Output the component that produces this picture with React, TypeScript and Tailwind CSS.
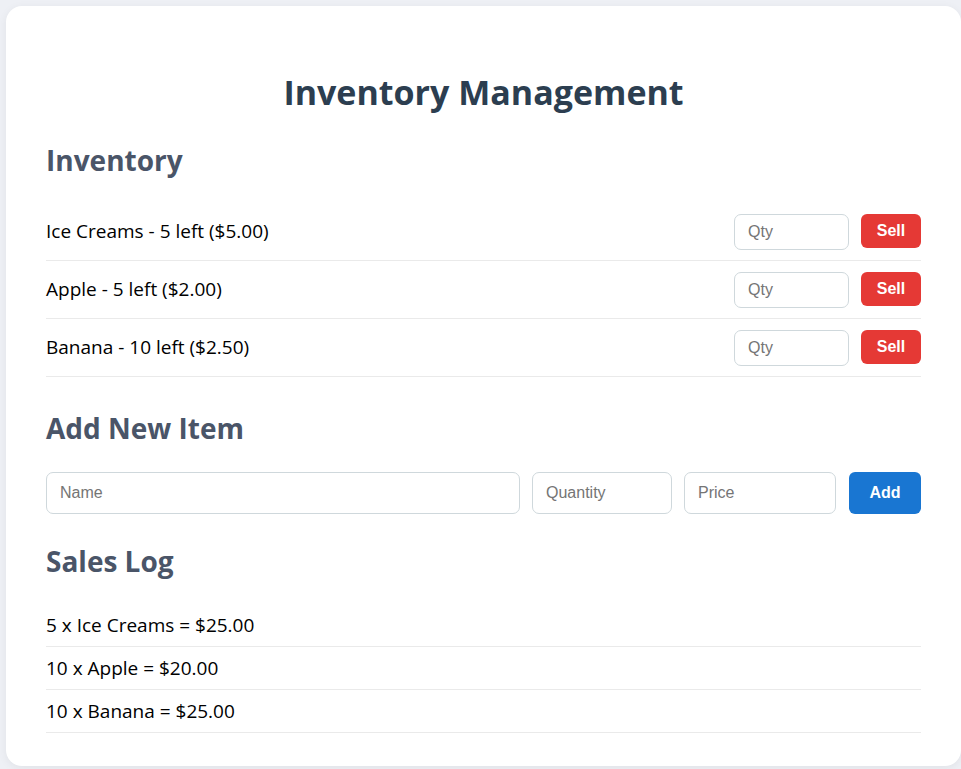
import React, { useState } from "react";

type Item = { name: string; qty: number; price: number };

const items: Item[] = [
  { name: "Ice Creams", qty: 5, price: 5 },
  { name: "Apple", qty: 5, price: 2 },
  { name: "Banana", qty: 10, price: 2.5 },
];

const sales = [
  "5 x Ice Creams = $25.00",
  "10 x Apple = $20.00",
  "10 x Banana = $25.00",
];

const inputCls =
  "rounded-[7px] border border-[#cfd8dc] bg-white px-[13px] text-[16px] text-[#333] placeholder:text-[#757575] outline-none font-['Liberation_Sans',Arial,sans-serif]";

export default function App() {
  const [stock] = useState(items);

  return (
    <div className="min-h-screen bg-[#eef0f5] pl-[6px] pt-[6px] font-['Open_Sans',sans-serif]">
      <div className="w-[955px] rounded-[16px] bg-white px-[40px] pb-[33px] pt-[40px] shadow-[0_2px_10px_rgba(0,0,0,0.06)]">
        <h1 className="mt-[24px] text-center text-[34px] font-bold leading-[44px] text-[#2c3e50]">
          Inventory Management
        </h1>

        <h2 className="mt-[27px] text-[28px] font-bold leading-[38px] text-[#4a5568]">
          Inventory
        </h2>
        <div className="mt-[24px]">
          {stock.map((it) => (
            <div
              key={it.name}
              className="flex h-[58px] items-center justify-between border-b border-[#eaeaea]"
            >
              <span className="text-[19px] text-black">
                {it.name} - {it.qty} left (${it.price.toFixed(2)})
              </span>
              <div className="flex items-center gap-[12px]">
                <input placeholder="Qty" className={`${inputCls} h-[36px] w-[115px]`} />
                <button className="mb-[1px] h-[34px] w-[60px] rounded-[6px] bg-[#e53935] font-['Liberation_Sans',Arial,sans-serif] text-[16px] font-bold text-white">
                  Sell
                </button>
              </div>
            </div>
          ))}
        </div>

        <h2 className="mt-[32px] text-[28px] font-bold leading-[38px] text-[#4a5568]">
          Add New Item
        </h2>
        <div className="mt-[25px] flex gap-[12px]">
          <input placeholder="Name" className={`${inputCls} h-[42px] w-[474px]`} />
          <input placeholder="Quantity" className={`${inputCls} h-[42px] w-[140px]`} />
          <input placeholder="Price" className={`${inputCls} h-[42px] w-[152px]`} />
          <button className="ml-[1px] h-[42px] w-[72px] rounded-[6px] bg-[#1976d2] font-['Liberation_Sans',Arial,sans-serif] text-[16px] font-bold text-white">
            Add
          </button>
        </div>

        <h2 className="mt-[28px] text-[28px] font-bold leading-[38px] text-[#4a5568]">
          Sales Log
        </h2>
        <div className="mt-[24px]">
          {sales.map((s) => (
            <div
              key={s}
              className="flex h-[43px] items-center border-b border-[#eaeaea] text-[19px] text-black"
            >
              {s}
            </div>
          ))}
        </div>
      </div>
    </div>
  );
}
